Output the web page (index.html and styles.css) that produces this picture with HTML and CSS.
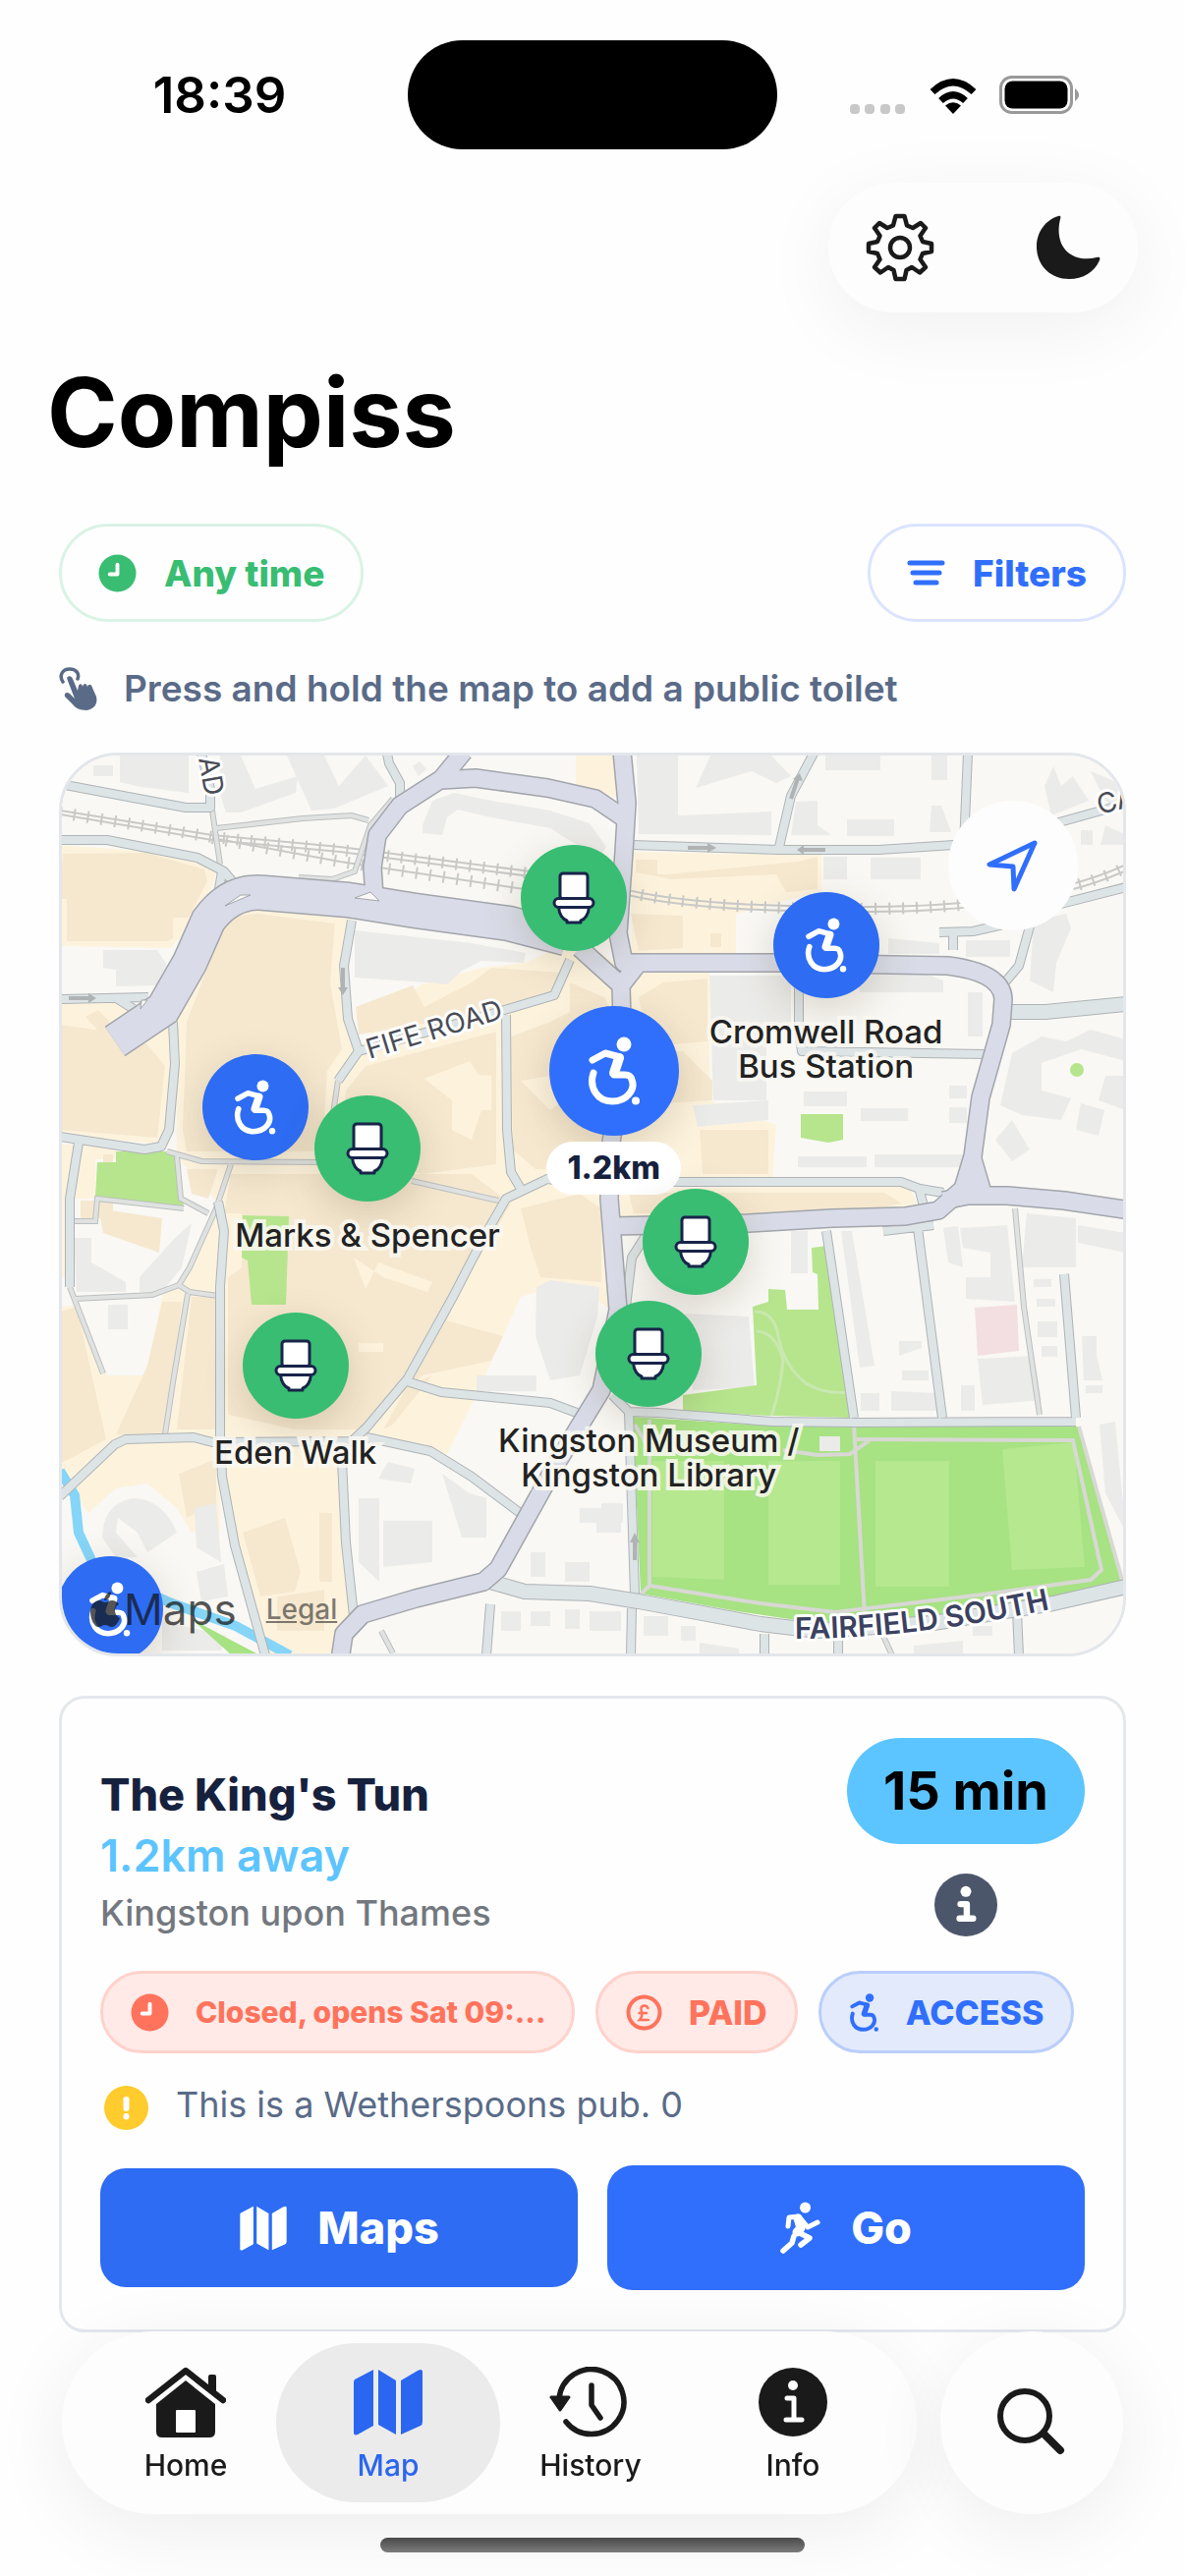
FILE: index.html
```html
<!DOCTYPE html>
<html lang="en">
<head>
  <meta charset="UTF-8">
  <meta name="viewport" content="width=device-width, initial-scale=1.0">
  <title>Compiss</title>
  <link rel="stylesheet" href="styles.css">
</head>
<body>

  <!-- Shared icons -->
  <svg class="sprite" aria-hidden="true">
    <symbol id="i-access" viewBox="0 0 54 70">
      <circle cx="37" cy="8" r="7.500" fill="currentColor"/>
      <g fill="none" stroke="currentColor" stroke-linecap="round" stroke-linejoin="round">
        <path d="M5 24 18 17 33 21" stroke-width="7"/>
        <path d="M32 22 27 37" stroke-width="10"/>
        <path d="M6 37C1 52 10 66 25 66C40 66 49 54 45 44C44 40 42 39 38 39H27" stroke-width="7"/>
      </g>
      <circle cx="49" cy="65.500" r="4" fill="currentColor"/>
    </symbol>
    <symbol id="i-toilet" viewBox="0 0 44 54">
      <g fill="#fff" stroke="#182449" stroke-width="3" stroke-linejoin="round">
        <rect x="8" y="2" width="28" height="26" rx="3"/>
        <path d="M6.500 36C7 44 11 49 15 50V52H29V50C33 49 37 44 37.500 36Z"/>
        <rect x="2" y="27.500" width="40" height="9" rx="4.500"/>
      </g>
    </symbol>
    <symbol id="i-clock" viewBox="0 0 40 40">
      <circle cx="20" cy="20" r="19.500" fill="currentColor"/>
      <path class="knock" d="M20 11V21H12" fill="none" stroke-width="4" stroke-linecap="round" stroke-linejoin="round"/>
    </symbol>
    <symbol id="i-map" viewBox="0 0 72 68">
      <g fill="currentColor">
        <path d="M2 11 21 1V58L5 67C2 68 1 67 1 65V14Q1 12 2 11Z"/>
        <path d="M26 1 44 12V67L26 57Z"/>
        <path d="M49 12 66 2C70 0 71 1 71 4V54Q71 57 69 58L49 67Z"/>
      </g>
    </symbol>
    <symbol id="i-info" viewBox="0 0 70 70">
      <circle cx="35" cy="35" r="35" fill="currentColor"/>
      <circle cx="35" cy="18" r="5" fill="#fff"/>
      <path d="M29 31H36V53M28 53H44" fill="none" stroke="#fff" stroke-width="5" stroke-linecap="round" stroke-linejoin="round"/>
    </symbol>
    <symbol id="i-info-bold" viewBox="0 0 70 70">
      <circle cx="35" cy="35" r="35" fill="currentColor"/>
      <circle cx="35" cy="20" r="6" fill="#fff"/>
      <path d="M29 34H36V50M28 50H43" fill="none" stroke="#fff" stroke-width="7" stroke-linecap="round" stroke-linejoin="round"/>
    </symbol>
  </svg>

  <div class="status-bar">
    <span class="time">18:39</span>
    <span class="island"></span>
    <span class="status-icons">
      <svg width="56" height="12" viewBox="0 0 56 12" fill="#c8c8c8">
        <rect width="10" height="10" rx="4" y="1"/><rect width="10" height="10" rx="4" x="15" y="1"/><rect width="10" height="10" rx="4" x="31" y="1"/><rect width="10" height="10" rx="4" x="46" y="1"/>
      </svg>
      <svg class="wifi" width="50" height="38" viewBox="0 0 50 38">
        <path d="M25 37 17 28.500Q25 22 33 28.500Z"/>
        <path d="M12.500 23.500Q25 12 37.500 23.500M4 14.500Q25-5 46 14.500" fill="none" stroke="#000" stroke-width="7"/>
      </svg>
      <svg width="81" height="40" viewBox="0 0 81 40">
        <rect x="1.500" y="1.500" width="72" height="36" rx="11" fill="none" stroke="#999" stroke-width="3"/>
        <rect x="5.500" y="5.500" width="64" height="28" rx="8"/>
        <path d="M77 13Q81 16 81 19.500T77 26Z" fill="#999"/>
      </svg>
    </span>
  </div>

  <header class="header">
    <div class="toolbar">
      <button class="tool-btn" aria-label="Settings">
        <svg width="70" height="70" viewBox="0 0 70 70" fill="none" stroke="currentColor" stroke-width="4.500" stroke-linejoin="round">
          <path d="M30.500 3H39.500L42 12.500 48 15 56 10 61 15 55.500 23 58 29 67 31V39L58 41 55.500 47 61 55 55 60.500 47 55 41.500 58 39.500 67H30.500L28.500 58 23 55 15 60.500 9 55 14.500 47 12 41 3 39V31L12 29 14.500 23 9 15 14 10 22 15 28 12.500Z"/>
          <circle cx="35" cy="35" r="10"/>
        </svg>
      </button>
      <button class="tool-btn" aria-label="Dark mode">
        <svg width="66" height="66" viewBox="0 0 66 66" fill="currentColor">
          <path d="M23 1C10 5 1 17 1 32C1 51 15 65 34 65C48 65 60 58 65 46C66 43 65 42 62 43C38 49 18 34 25 4C26 1 25 0 23 1Z"/>
        </svg>
      </button>
    </div>
    <h1>Compiss</h1>
  </header>

  <main>
    <div class="filters">
      <button class="pill pill-green">
        <svg width="39" height="39"><use href="#i-clock"/></svg>
        Any time
      </button>
      <button class="pill pill-blue">
        <svg width="39" height="26" viewBox="0 0 39 26" stroke="currentColor" stroke-width="5" stroke-linecap="round">
          <path d="M3 3H36M6 13H33M9 23H30"/>
        </svg>
        Filters
      </button>
    </div>

    <p class="hint">
      <svg width="40" height="44" viewBox="0 0 40 44">
        <path d="M4 15C0 9 3 2 11 2C18 2 21 7 19 12" fill="none" stroke="currentColor" stroke-width="3.500" stroke-linecap="round"/>
        <path d="M8 11C10 8 13 9 14 12L19 24 20 19C21 16 24 17 24 20 25 16 28 16 29 20 30 17 33 17 34 21L38 30C40 38 35 43 28 44C21 44 16 41 14 38L6 30C5 26 8 25 11 27L16 32 9 14Z" fill="currentColor"/>
      </svg>
      Press and hold the map to add a public toilet
    </p>

    <section class="map" aria-label="Map">
      <svg class="map-canvas" viewBox="63 769 1080 914" preserveAspectRatio="xMidYMid slice" aria-hidden="true">
        <rect x="60" y="766" width="1086" height="920" fill="#f9f8f4"/>

        <!-- town centre -->
        <g fill="#fdf3dd">
          <path d="M61 860 170 868 208 877 220 890 208 925 174 965 61 963ZM61 1018 120 1015 176 1040 172 1165 61 1155Z"/>
          <path d="M180 1040 200 985 225 935 250 925 358 935 352 990 365 1068 400 1020 430 1002 490 985 535 980 590 955 640 990 722 990V1120L790 1145 786 1200H620V1210L925 1206 935 1230 840 1240H625L622 1333 580 1305 530 1320 480 1430 455 1480 358 1465 345 1485 355 1640 352 1683H273L240 1580 226 1500 224 1460 222 1225 180 1177Z"/>
          <path d="M643 867 836 870V907L749 930V970H643ZM586 769H628V812L586 800Z"/>
          <path d="M61 1165H118V1180H97V1220H76V1300H61ZM61 1330 80 1328 108 1400H150L165 1318 195 1292 222 1230 224 1560 195 1560 180 1535 150 1510 118 1515 90 1540 61 1500Z"/>
        </g>
        <g fill="#f5e8cf">
          <path d="M64 869 150 868 208 885 211 897 192 934H176V955L170 958H68V915H61ZM61 1043 110 1050 150 1063 168 1085 160 1158 61 1150ZM87 1035 100 1028 112 1040 108 1058Z"/>
          <path d="M225 948Q235 930 262 930L341 940 336 1000 348 1068 333 1090 328 1172H190L186 1150 190 1040Z"/>
          <path d="M362 1025 420 1003 432 1025 480 1000 500 985 572 990 574 1000 562 1010 500 1030 365 1053ZM352 1110 372 1085 505 1050V1185L430 1195 345 1172ZM520 1055 560 1040 580 1030 580 1000 615 1015 625 1035V1190H545L522 1170Z"/>
          <path d="M235 1195H480L520 1225 470 1310 430 1400 370 1455H300L232 1440 232 1300 246 1290V1235H228ZM105 1175H115V1240H82V1222H105ZM190 1190H222L212 1220 195 1215ZM100 1230 165 1240 162 1275 105 1255Z"/>
          <path d="M440 1340 512 1360 500 1385 430 1400ZM440 1400 400 1450 390 1455 415 1410ZM61 1335 78 1330 108 1465 61 1490ZM150 1390 165 1325H185L168 1465 118 1460ZM195 1320H220V1455H180ZM182 1500 220 1485V1530L190 1545Z"/>
          <path d="M247 1560 290 1545 306 1600 300 1620 265 1625ZM282 1625 330 1618V1660H282ZM325 1540H338V1610H325ZM232 1300H300V1350H340L335 1400 240 1440Z"/>
          <path d="M647 875H669V890H678L812 877 832 872V905L800 908 790 890 684 895 647 888ZM642 930 695 932V965L650 968ZM723 950H734V964H723ZM650 1015 675 1000 720 996V1060L660 1065ZM620 1070H695L725 1100V1120L640 1125ZM712 1150H782V1195H715ZM640 1214H900L918 1225 860 1235H645ZM530 1230 590 1215 612 1230V1305L550 1300 540 1270Z"/>
        </g>
        <g fill="#fdf3dd">
          <path d="M432 1098 478 1080 487 1094 500 1095V1130H490L480 1160 460 1150V1120ZM530 1100 560 1095 585 1070 600 1100 560 1130Z"/>
          <path d="M360 1280 372 1312 385 1285 440 1305 435 1315 390 1300ZM365 1367H390V1376H365Z"/>
        </g>

        <!-- buildings -->
        <g fill="#ebebe9">
          <path d="M122 769H192V807L143 801 122 796ZM95 779H115V790H95ZM224 769H245L260 803 303 790 301 807 245 827H230L224 808ZM292 769H330L345 800 372 769 395 800 340 823 317 825Z"/>
          <path d="M430 840 440 815 462 807 500 815 560 825 600 838 617 862 612 870 590 862 560 843 500 832 466 824 455 832 450 850 430 848ZM420 780 427 775 434 783 426 790Z"/>
          <path d="M361 947 480 960 535 970 533 980 490 978 470 988 455 1002 435 1000 361 995ZM105 967 160 967 170 982 160 1003 118 1004V987L105 985Z"/>
          <path d="M648 769H690V830L785 826V850L650 849ZM723 769H785L805 790 790 797 765 785 708 802ZM840 769H896V784H840ZM810 816 832 815V840L846 850H805ZM862 834H910V851H862ZM948 820H958L968 847H946ZM948 768H964V794H948ZM838 872H862V895H838ZM886 873H937V895H886Z"/>
          <path d="M1063 800 1072 780 1080 800 1092 790 1105 810 1108 815 1070 830ZM1110 785 1146 800V830L1125 815ZM1100 845H1112V860H1100ZM1125 840 1146 850V860H1120ZM1052 938 1085 930 1090 945 1075 980 1072 1010 1048 998Z"/>
          <path d="M722 993H805V1050H780V1120H726ZM904 955 956 960V971H904ZM983 957H1028V974H983ZM870 992 925 985 960 998V1010H875ZM985 1010H1000V1055H985Z"/>
          <path d="M1030 1072 1060 1055 1085 1060 1110 1048 1146 1058V1080L1100 1068 1060 1082V1110L1090 1118 1080 1140 1040 1135 1018 1125ZM1100 1123 1124 1130 1118 1156 1095 1150ZM1125 1095H1146V1130L1118 1120ZM1013 1160 1030 1140 1048 1170 1030 1182Z"/>
          <path d="M812 1177H882V1188H812ZM890 1175H985V1188H890ZM818 1111H862V1126H818ZM876 1128H924V1141H876ZM966 1105H984V1118H966ZM966 1127H984V1143H966ZM705 1125 782 1120V1140L710 1147Z"/>
          <path d="M697 1337 762 1340 768 1412 705 1415ZM805 1253H822V1296H805ZM856 1253H867L890 1390 875 1392ZM960 1250 975 1248 980 1290 965 1285ZM977 1250 1025 1247 1033 1325 983 1322V1300H1008V1275L980 1270ZM1045 1235 1095 1240V1290H1040ZM1097 1247 1146 1255V1275L1097 1265ZM995 1383 1052 1380 1060 1425 1000 1430Z"/>
          <path d="M915 1365H938V1372L915 1380ZM918 1395H945V1405H918ZM876 1418H895V1436H876ZM907 1416 955 1418V1436H907ZM978 1410H992V1436H978ZM1052 1302H1070V1310H1052ZM1055 1322H1074V1330H1055ZM1056 1345H1076V1361H1056ZM1060 1370H1076V1381H1060ZM1101 1360H1116V1380L1122 1405H1103ZM1105 1410H1122V1418H1105ZM1119 1450 1135 1447 1140 1500 1146 1560 1125 1520Z"/>
          <path d="M546 1310 560 1303 610 1310 608 1340 590 1400 560 1405 545 1360ZM485 1400H546V1416H485ZM75 1260H93V1285L128 1305V1315H78ZM142 1300 178 1260 195 1245 185 1290 165 1315H142ZM110 1328H130V1353H110Z"/>
          <path d="M104 1565Q105 1530 135 1525Q165 1525 180 1560L150 1580 140 1560 120 1545 118 1560 140 1585 118 1585ZM198 1535 220 1530 225 1590 200 1575ZM200 1600 228 1592 232 1625 205 1630ZM165 1650 230 1665 225 1680H165ZM395 1488 422 1495 418 1510 385 1505Z"/>
          <path d="M365 1525H386V1610L365 1590ZM390 1548H440V1590L390 1595ZM450 1500 478 1520 495 1525V1565H470ZM590 1535H608V1550H590ZM612 1530H634V1550H612ZM540 1580H555V1605H540ZM575 1590H600V1610H575ZM607 1535H632V1560H607Z"/>
          <path d="M510 1640H530V1660H510ZM540 1640H560V1655H540ZM575 1638H590V1658H575ZM600 1640H632V1660H600ZM655 1645H680V1665H655ZM693 1655H708V1670H693ZM712 1672 752 1678V1685H712ZM930 1675 980 1670V1685H930ZM990 1655H1010V1665H990Z"/>
        </g>
        <path d="M992 1331 1035 1328 1037 1375 995 1380Z" fill="#f3dfe1"/>

        <!-- parks -->
        <g fill="#b6e58d">
          <path d="M118 1172H180L187 1228 97 1218 99 1183H118ZM247 1237 294 1238 291 1328H256L252 1283 246 1280ZM815 1134H858V1160L843 1163 815 1158Z"/>
          <circle cx="1096" cy="1089" r="7"/>
          <path d="M826 1270 842 1268 847 1290 867 1443 785 1441 695 1437V1420L770 1410 766 1330 782 1325V1312L799 1313 801 1333H833L832 1297 827 1295Z"/>
        </g>
        <path d="M644 1442 780 1451 1098 1452 1143 1612 985 1640 850 1655 750 1640 652 1622Z" fill="#a7e283"/>
        <path d="M664 1487H737V1608L664 1605ZM782 1487H855V1613H782ZM891 1487H966V1615H891ZM1020 1475 1093 1468 1104 1595 1030 1598Z" fill="#b5e88f"/>
        <g fill="none" stroke="#d8d8d4" stroke-width="4">
          <path d="M661 1445V1614L774 1632 850 1641 1000 1623 1110 1608 1121 1598 1092 1466 872 1465M869 1450 880 1645M1098 1452 1143 1612M797 1476 832 1481 865 1480 885 1466M646 1450 661 1475M661 1614 650 1625"/>
        </g>
        <path d="M768 1335Q788 1335 792 1360Q798 1390 820 1408Q840 1420 867 1417M770 1355Q790 1356 797 1385Q793 1420 785 1441" fill="none" stroke="#c9e8b0" stroke-width="3"/>
        <path d="M834 1462H855V1477H834Z" fill="#ebebe9"/>

        <!-- river -->
        <path d="M61 1497 76 1522 80 1560 94 1590 130 1612 175 1632 240 1655 295 1685" fill="none" stroke="#85d5f8" stroke-width="10"/>
        <path d="M195 1648 240 1672 265 1685H236Z" fill="#a7e283"/>

        <!-- railway -->
        <g fill="none" stroke="#c9c9c7">
          <path d="M61 825 216 850 346 862 540 887M61 829 216 855 346 867 540 892M216 853 346 877 540 906M639 906Q716 924 886 923T1146 880M639 911Q716 929 886 928T1146 886" stroke-width="2"/>
          <path d="M61 827 216 852 346 865 540 889M216 853 346 877 540 906M639 908Q716 926 886 925T1146 883" stroke-width="12" stroke-dasharray="2 12"/>
        </g>

        <!-- streets: casing first, surface on top -->
        <defs>
          <g id="lanes" fill="none">
            <path d="M216 825 224 880M220 843 308 833 358 830 375 835M304 893 338 895 361 887 377 840 400 813M344 1100 338 1140M170 1172 205 1182 330 1183M419 1202 507 1222M235 1185 220 1230 193 1290 182 1308 155 1318 76 1322M180 1177 184 1220 212 1235M187 1230 99 1220 97 1243H76M182 1308 193 1315 222 1319M191 1317 176 1407 168 1460M71 1310 105 1398M1033 1230 1042 1330 1058 1440M388 1660 400 1683M892 1650 908 1685"/>
          </g>
          <g id="streets" fill="none" stroke-linejoin="round">
            <path d="M61 798 189 822H214V803L205 767M61 855 109 855 201 873 228 887 239 900M226 887 222 910M394 767 396 777 407 797V812M61 1017 151 1015M117 1015 136 1027"/>
            <path d="M358 937 350 983 354 1037 365 1070 344 1100M365 1070 507 1030 564 1013 580 977M515 1033 516 1150 520 1193 530 1210"/>
            <path d="M176 1040 178 1083 172 1150 164 1167 147 1170 61 1157M80 1163 71 1220V1310M222 1223 228 1253 224 1310V1460L226 1503 239 1573 270 1685"/>
            <path d="M61 1523 117 1470 128 1465 197 1463 216 1468 358 1467 373 1453 415 1403 461 1320 492 1260 515 1220 557 1200 580 1203H917L936 1210 960 1214M936 1212 940 1228M411 1405 449 1417 560 1428 587 1438M373 1463 438 1477 480 1503 532 1542M348 1487 352 1570 360 1645M345 1465 348 1490"/>
            <path d="M499 1633 495 1685M643 1637 642 1685M778 1663V1685M853 1670V1685M1035 1640 1037 1685M640 1437 646 1622M623 1420 640 1437 670 1438 785 1447 871 1448 1095 1447M841 1253 869 1443M934 1250 959 1443M899 1253 950 1247M1083 1297 1095 1443M662 1250 643 1280 637 1330"/>
            <path d="M644 860 793 865 894 865 971 860 1040 860M828 767 805 810 793 862M985 767 981 860M1060 842 1146 818M1060 925 1146 903M956 949 990 948 1017 942 1048 930M970 950V967M1048 943 1037 983 1021 1002M813 1000V1050L816 1070 1002 1073"/>
          </g>
          <g id="roads" fill="none" stroke-linejoin="round">
            <path d="M499 1610 534 1620 600 1622 650 1630 774 1653 832 1660 950 1652 1072 1632 1146 1615M1020 1030H1064L1146 1022"/>
          </g>
          <g id="main" fill="none" stroke-linejoin="round">
            <path d="M472 765 449 793 407 820 384 850 379 883 381 912M449 794 484 792 557 802 606 813 634 832"/>
            <path d="M633 765 638 817 635 867 629 950 635 980 793 980 965 983Q1020 990 1021 1017L1019 1043 998 1117 990 1177 980 1210 955 1232 921 1238 847 1240 762 1245 624 1248"/>
            <path d="M986 1217 1025 1217 1083 1222 1150 1232M990 1180 1000 1214M960 1222 1000 1214"/>
            <path d="M590 965 632 1003 650 980M632 1003 634 1080 622 1163 620 1220 629 1333 612 1415 568 1487 507 1597 492 1610 423 1627 369 1643 350 1663 346 1690"/>
          </g>
          <path id="trunk" d="M117 1060 166 1027 193 980 212 937Q235 905 270 909L354 916 423 927 518 940 576 955" fill="none"/>
        </defs>
        <use href="#lanes" stroke="#bcbfbf" stroke-width="6"/>
        <use href="#lanes" stroke="#dfe2e1" stroke-width="4"/>
        <use href="#streets" stroke="#aeb3b6" stroke-width="10"/>
        <use href="#streets" stroke="#dde4e6" stroke-width="8"/>
        <use href="#roads" stroke="#aeb3b6" stroke-width="16"/>
        <use href="#roads" stroke="#dde4e6" stroke-width="14"/>
        <use href="#main" stroke="#a2a5ab" stroke-width="20"/>
        <use href="#trunk" stroke="#a2a5ab" stroke-width="37"/>
        <use href="#main" stroke="#d9dce8" stroke-width="17"/>
        <use href="#trunk" stroke="#d9dce8" stroke-width="34"/>
        <path d="M229 922 245 911H255ZM361 914 377 908 386 917ZM144 1018H150L143 1027Z" fill="#f9f8f4" stroke="#a2a5ab"/>
        <path d="M70 1016H92M349 985V1008M805 813 812 792M700 863H722M840 865H815M646 1588V1566" stroke="#b0b3b3" stroke-width="4"/>
        <path d="M90 1011V1021L98 1016ZM344 1005H354L349 1013ZM807 793 817 795 814 787ZM720 858V868L729 863ZM818 860V870L811 865ZM641 1570H651L646 1560Z" fill="#b0b3b3"/>

        <!-- street names -->
        <path id="fairfield" d="M809 1668 Q940 1668 1100 1631" fill="none"/>
        <g class="street-name">
          <text transform="translate(202 772) rotate(80)">AD</text>
          <text transform="translate(376 1078) rotate(-17)">FIFE ROAD</text>
          <text transform="translate(1119 829) rotate(-14)">CA</text>
          <text class="street-name-bold"><textPath href="#fairfield">FAIRFIELD SOUTH</textPath></text>
        </g>
      </svg>

      <button class="pin pin-blue at-corner" aria-label="Accessible toilet"><svg width="43" height="56"><use href="#i-access"/></svg></button>
      <button class="pin pin-green at-station" aria-label="Toilet"><svg width="44" height="54"><use href="#i-toilet"/></svg></button>
      <button class="pin pin-blue at-cromwell"><svg width="43" height="56"><use href="#i-access"/></svg><span class="pin-label">Cromwell Road<br>Bus Station</span></button>
      <button class="pin pin-blue at-west" aria-label="Accessible toilet"><svg width="43" height="56"><use href="#i-access"/></svg></button>
      <button class="pin pin-green at-marks"><svg width="44" height="54"><use href="#i-toilet"/></svg><span class="pin-label">Marks &amp; Spencer</span></button>
      <button class="pin pin-blue pin-selected at-tun"><svg width="54" height="70"><use href="#i-access"/></svg><span class="pin-distance">1.2km</span></button>
      <button class="pin pin-green at-east" aria-label="Toilet"><svg width="44" height="54"><use href="#i-toilet"/></svg></button>
      <button class="pin pin-green at-museum"><svg width="44" height="54"><use href="#i-toilet"/></svg><span class="pin-label">Kingston Museum /<br>Kingston Library</span></button>
      <button class="pin pin-green at-eden"><svg width="44" height="54"><use href="#i-toilet"/></svg><span class="pin-label">Eden Walk</span></button>

      <button class="locate" aria-label="My location">
        <svg width="54" height="54" viewBox="0 0 54 54" fill="none" stroke="currentColor" stroke-width="5" stroke-linejoin="round">
          <path d="M49 4 3 26 27 28 28 51Z"/>
        </svg>
      </button>

      <div class="map-credit">
        <span class="map-brand">
          <svg width="30" height="37" viewBox="0 0 30 37" fill="currentColor">
            <path d="M21 0C21 5 18 9 14 9C14 5 17 1 21 0ZM15 11C18 11 19 9 22 9C25 9 28 11 29 13C23 16 24 24 30 27C28 32 25 36 22 36C19 36 18 34 15 34C12 34 11 36 8 36C4 36 0 28 0 21C0 14 4 9 9 9C11 9 13 11 15 11Z"/>
          </svg>Maps
        </span>
        <a class="legal" href="#legal">Legal</a>
      </div>
    </section>

    <article class="card">
      <div class="card-top">
        <div>
          <h2>The King's Tun</h2>
          <p class="distance">1.2km away</p>
          <p class="town">Kingston upon Thames</p>
        </div>
        <div class="card-side">
          <span class="eta">15 min</span>
          <button class="info-btn" aria-label="More information"><svg width="64" height="64"><use href="#i-info-bold"/></svg></button>
        </div>
      </div>

      <div class="tags">
        <span class="tag tag-red tag-hours">
          <svg width="39" height="39"><use href="#i-clock"/></svg>
          Closed, opens Sat 09:...
        </span>
        <span class="tag tag-red">
          <svg width="37" height="37" viewBox="0 0 37 37" fill="none" stroke="currentColor" stroke-linecap="round">
            <circle cx="18.500" cy="18.500" r="16" stroke-width="4"/>
            <path d="M22.500 14C21 10 15 11 15.500 15 17 20 17 23 14 26H23M13.500 19H21" stroke-width="2.500"/>
          </svg>
          PAID
        </span>
        <span class="tag tag-blue">
          <svg width="31" height="39"><use href="#i-access"/></svg>
          ACCESS
        </span>
      </div>

      <p class="note">
        <svg width="45" height="45" viewBox="0 0 45 45">
          <circle cx="22.500" cy="22.500" r="22.500" fill="#ffcb2d"/>
          <path d="M22.500 14V23M22.500 31V31.500" stroke="#fff" stroke-width="6" stroke-linecap="round"/>
        </svg>
        This is a Wetherspoons pub. 0
      </p>

      <div class="actions">
        <button class="btn btn-maps">
          <svg width="50" height="46"><use href="#i-map"/></svg>
          Maps
        </button>
        <button class="btn btn-go">
          <svg width="42" height="53" viewBox="0 0 42 53" fill="none" stroke="currentColor" stroke-linecap="round" stroke-linejoin="round">
            <circle cx="25.500" cy="6" r="5.500" fill="currentColor" stroke="none"/>
            <path d="M8 25 9 16 19 15 28 26 38 21" stroke-width="5"/>
            <path d="M18 17 21 27 17 31" stroke-width="9"/>
            <path d="M18 31 30 37 21 44" stroke-width="5.500"/>
            <path d="M14 35 12 42 3 50" stroke-width="5.500"/>
          </svg>
          Go
        </button>
      </div>
    </article>
  </main>

  <div class="bottom-bar">
    <nav class="tabs">
      <a class="tab" href="#home">
        <svg width="82" height="72" viewBox="0 0 82 72">
          <path d="M3 34 41 4 79 34" fill="none" stroke="currentColor" stroke-width="6.500" stroke-linecap="round" stroke-linejoin="round"/>
          <path d="M64 20V10Q64 8 66 8H70Q72 8 72 10V28Z" fill="currentColor"/>
          <path d="M41 14 71 38V66Q71 72 65 72H17Q11 72 11 66V38Z" fill="currentColor"/>
          <rect x="31" y="44" width="20" height="23" rx="1" fill="#fff"/>
        </svg>
        Home
      </a>
      <a class="tab tab-active" href="#map">
        <svg width="72" height="72" viewBox="0 0 72 72"><use href="#i-map" y="2" width="72" height="68"/></svg>
        Map
      </a>
      <a class="tab" href="#history">
        <svg width="84" height="72" viewBox="0 0 84 72" fill="none" stroke="currentColor" stroke-linecap="round">
          <path d="M10 33A33 33 0 1 1 17 56" stroke-width="5.500"/>
          <path d="M43 19V39L52 52" stroke-width="5.500" stroke-linejoin="round"/>
          <path d="M2 31H20L11 44Z" fill="currentColor" stroke-width="3" stroke-linejoin="round"/>
        </svg>
        History
      </a>
      <a class="tab" href="#info">
        <svg width="70" height="72" viewBox="0 0 70 72"><use href="#i-info" y="1" width="70" height="70"/></svg>
        Info
      </a>
    </nav>
    <button class="search" aria-label="Search">
      <svg width="70" height="70" viewBox="0 0 70 70" fill="none" stroke="currentColor" stroke-linecap="round">
        <circle cx="28" cy="28" r="25" stroke-width="6"/>
        <path d="M48 47 64 63" stroke-width="8"/>
      </svg>
    </button>
    <span class="home-indicator"></span>
  </div>

</body>
</html>
```
FILE: styles.css
```css
* {
  box-sizing: border-box;
}

body {
  margin: 0;
  min-height: 100vh;
  background: #fefefe;
  color: #16213e;
  font-family: Inter, "Liberation Sans", sans-serif;
}

h1, h2, p {
  margin: 0;
}

button {
  font: inherit;
  color: inherit;
  background: none;
  border: none;
  padding: 0;
  cursor: pointer;
}

a {
  color: inherit;
  text-decoration: none;
}

svg {
  flex: none;
  display: block;
}

.sprite {
  position: absolute;
  width: 0;
  height: 0;
}

.knock {
  stroke: #fff;
}

/* Status bar */
.status-bar {
  display: grid;
  grid-template-columns: 1fr auto 1fr;
  align-items: center;
  padding-top: 41px;
  color: #000;
}

.time {
  padding-left: 32px;
  text-align: center;
  font-size: 51px;
  font-weight: 600;
}

.island {
  width: 376px;
  height: 111px;
  border-radius: 56px;
  background: #000;
}

.status-icons {
  display: flex;
  align-items: flex-end;
  padding-left: 74px;
}

.wifi {
  margin: 0 22px 0 24px;
}

/* Header */
.header {
  padding: 34px 48px 0;
}

.toolbar {
  display: flex;
  justify-content: space-between;
  align-items: center;
  width: 315px;
  height: 132px;
  margin-left: auto;
  padding: 0 38px;
  border-radius: 66px;
  background: #fdfdfd;
  box-shadow: 0 16px 80px rgba(0, 0, 0, 0.06);
}

.tool-btn {
  color: #1a1a1a;
}

h1 {
  margin-top: 42px;
  color: #000;
  font-size: 97px;
  font-weight: 700;
  line-height: 120px;
}

/* Content */
main {
  padding: 0 60px;
}

.filters {
  display: flex;
  justify-content: space-between;
  margin-top: 53px;
}

.pill {
  display: flex;
  align-items: center;
  gap: 28px;
  height: 100px;
  padding: 0 37px;
  border: 3px solid;
  border-radius: 50px;
  font-size: 37px;
  font-weight: 800;
}

.pill-green {
  color: #38bd72;
  border-color: #d9f3e5;
}

.pill-blue {
  color: #306ffc;
  border-color: #dae4fe;
}

.hint {
  display: flex;
  align-items: center;
  gap: 26px;
  margin-top: 44px;
  color: #5a6b88;
  font-size: 37px;
  font-weight: 600;
  line-height: 48px;
}

/* Map */
.map {
  position: relative;
  aspect-ratio: 1086 / 920;
  margin-top: 41px;
  border: 3px solid #e3e6ea;
  border-radius: 60px;
  overflow: hidden;
}

.map-canvas {
  position: absolute;
  inset: 0;
  width: 100%;
  height: 100%;
}

.street-name {
  fill: #4a4c56;
  stroke: #fff;
  stroke-width: 6px;
  stroke-linejoin: round;
  paint-order: stroke;
  font-size: 28px;
}

.street-name-bold {
  fill: #3b4160;
  font-size: 30px;
  font-weight: 600;
}

.pin {
  position: absolute;
  display: flex;
  justify-content: center;
  align-items: center;
  width: 108px;
  height: 108px;
  border-radius: 50%;
  color: #fff;
  transform: translate(-50%, -50%);
  box-shadow: 0 12px 40px rgba(90, 70, 40, 0.2);
}

.pin-green {
  background: #38bd72;
}

.pin-blue {
  background: #2d6cf3;
}

.pin-selected {
  width: 132px;
  height: 132px;
  background: #306ffc;
}

.pin-label {
  position: absolute;
  top: 125px;
  color: #222;
  font-size: 33px;
  font-weight: 500;
  line-height: 35px;
  text-align: center;
  white-space: nowrap;
  -webkit-text-stroke: 8px rgba(250, 248, 242, 0.85);
  paint-order: stroke fill;
}

.pin-distance {
  position: absolute;
  top: 138px;
  padding: 0 21px;
  border-radius: 27px;
  background: #fff;
  color: #16213e;
  font-size: 32px;
  font-weight: 800;
  line-height: 54px;
}

.at-station { left: 48.2%; top: 15.9%; }
.at-cromwell { left: 72%; top: 21.1%; }
.at-tun { left: 52%; top: 35.1%; }
.at-west { left: 18.2%; top: 39.2%; }
.at-marks { left: 28.8%; top: 43.8%; }
.at-east { left: 59.7%; top: 54.2%; }
.at-museum { left: 55.3%; top: 66.6%; }
.at-eden { left: 22%; top: 67.9%; }
.at-corner { left: 4.5%; top: 95.1%; }

.locate {
  position: absolute;
  top: 46px;
  right: 46px;
  display: flex;
  justify-content: center;
  align-items: center;
  width: 132px;
  height: 132px;
  border-radius: 50%;
  background: #fdfdfd;
  color: #306ffc;
}

.map-credit {
  position: absolute;
  left: 29px;
  bottom: 18px;
  display: flex;
  align-items: center;
  gap: 30px;
  color: rgba(20, 20, 20, 0.72);
}

.map-brand {
  display: flex;
  align-items: center;
  gap: 4px;
  font-size: 44px;
}

.legal {
  color: rgba(40, 40, 40, 0.6);
  font-size: 28px;
  font-weight: 500;
  text-decoration: underline;
}

/* Place card */
.card {
  margin-top: 40px;
  padding: 40px 39px;
  border: 3px solid #e4e7ec;
  border-radius: 26px;
  background: #fefefe;
}

.card-top {
  display: flex;
  justify-content: space-between;
}

h2 {
  margin-top: 28px;
  font-size: 45px;
  font-weight: 800;
  line-height: 60px;
}

.distance {
  color: #5cc4ff;
  font-size: 45px;
  font-weight: 600;
  line-height: 64px;
}

.town {
  color: #73787f;
  font-size: 36px;
  font-weight: 500;
  line-height: 52px;
}

.card-side {
  display: flex;
  flex-direction: column;
  align-items: center;
  gap: 30px;
}

.eta {
  padding: 0 37px;
  border-radius: 54px;
  background: #5cc5ff;
  color: #000;
  font-size: 54px;
  font-weight: 700;
  line-height: 108px;
}

.info-btn {
  color: #4c566b;
}

.tags {
  display: flex;
  gap: 21px;
  margin-top: 33px;
}

.tag {
  display: flex;
  align-items: center;
  gap: 27px;
  height: 84px;
  padding: 0 28px;
  border: 3px solid;
  border-radius: 42px;
  font-size: 34px;
  font-weight: 800;
  white-space: nowrap;
}

.tag-hours {
  width: 483px;
  font-size: 30px;
}

.tag-red {
  color: #ff735c;
  background: #ffeae7;
  border-color: #ffd2cb;
}

.tag-red .knock {
  stroke: #ffeae7;
}

.tag-blue {
  color: #306ffc;
  background: #e2eafc;
  border-color: #bacefc;
}

.note {
  display: flex;
  align-items: flex-end;
  gap: 28px;
  margin-top: 26px;
  padding-left: 4px;
  color: #5a6b88;
  font-size: 36px;
  line-height: 52px;
}

.actions {
  display: grid;
  grid-template-columns: 1fr 1fr;
  align-items: center;
  gap: 30px;
  margin-top: 36px;
}

.btn {
  display: flex;
  justify-content: center;
  align-items: center;
  gap: 30px;
  border-radius: 26px;
  color: #fff;
  font-size: 45px;
  font-weight: 800;
}

.btn-maps {
  height: 121px;
  background: #2d6cf3;
}

.btn-go {
  height: 127px;
  background: #306ffc;
}

/* Bottom bar */
.bottom-bar {
  position: fixed;
  left: 0;
  right: 0;
  bottom: 0;
  display: grid;
  grid-template-columns: 1fr 186px;
  column-gap: 24px;
  padding: 0 63px 24px;
}

.tabs {
  display: grid;
  grid-template-columns: repeat(4, 1fr);
  height: 186px;
  padding: 12px 23px;
  border-radius: 93px;
  background: #fdfdfd;
  box-shadow: 0 16px 80px rgba(0, 0, 0, 0.07);
}

.tab {
  display: flex;
  flex-direction: column;
  align-items: center;
  gap: 10px;
  margin: 0 -11px;
  padding-top: 24px;
  border-radius: 81px;
  color: #1a1a1a;
  font-size: 30px;
  font-weight: 500;
  line-height: 36px;
}

.tab-active {
  background: #ebebeb;
  color: #2a66f0;
}

.search {
  display: flex;
  justify-content: center;
  align-items: center;
  height: 186px;
  border-radius: 50%;
  background: #fdfdfd;
  color: #1a1a1a;
  box-shadow: 0 16px 80px rgba(0, 0, 0, 0.07);
}

.home-indicator {
  grid-column: 1 / -1;
  justify-self: center;
  width: 432px;
  height: 15px;
  margin-top: 24px;
  border-radius: 8px;
  background: linear-gradient(#4a4a4a, #7c7c7c);
}
```
